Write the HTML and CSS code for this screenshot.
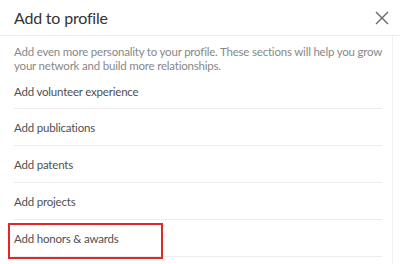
FILE: index.html
```html
<!DOCTYPE html>
<html lang="en">
<head>
  <meta charset="UTF-8" />
  <title>Add to profile</title>
  <link rel="stylesheet" href="styles.css">
</head>
<body>
  <div class="modal">
    <div class="modal-header">
      <h2>Add to profile</h2>
      <button class="close-btn" title="Dismiss">
        <svg width="14" height="14" viewBox="0 0 14 14">
          <path d="M1 1 L13 13 M13 1 L1 13" stroke="#666" stroke-width="1.4" fill="none"/>
        </svg>
      </button>
    </div>
    <div class="modal-body">
      <p class="intro">Add even more personality to your profile. These sections will help you grow your network and build more relationships.</p>
      <ul class="section-list">
        <li>Add volunteer experience</li>
        <li>Add publications</li>
        <li>Add patents</li>
        <li>Add projects</li>
        <li class="highlight">Add honors &amp; awards</li>
      </ul>
    </div>
  </div>
</body>
</html>
```

FILE: styles.css
```css
/* ===== Base ===== */
* {
  margin: 0;
  padding: 0;
  box-sizing: border-box;
}
html, body {
  background: #fff;
  font-family: 'Lato', 'Open Sans', sans-serif;
  color: #333;
  overflow: hidden;
}

/* ===== Header ===== */
.modal-header {
  display: flex;
  justify-content: space-between;
  align-items: center;
  height: 36px;
  padding: 0 6px 0 14px;
  border-bottom: 1px solid #ebebeb;
}
.modal-header h2 {
  font-size: 16px;
  font-weight: 400;
  color: #333;
  letter-spacing: -0.2px;
}
.close-btn {
  background: none;
  border: none;
  width: 24px;
  height: 24px;
  display: flex;
  justify-content: center;
  align-items: center;
}

/* ===== Body ===== */
.modal-body {
  margin-right: 7px;
  border-right: 1px solid #f0f0f0;
  height: 228px;
  padding: 9px 8px 0 14px;
}
.intro {
  font-size: 11.5px;
  line-height: 14px;
  letter-spacing: -0.2px;
  color: #888;
}
.section-list {
  list-style: none;
  margin-top: 0;
  margin-right: 2px;
}
.section-list li {
  position: relative;
  height: 37px;
  line-height: 37px;
  font-size: 11.5px;
  letter-spacing: -0.2px;
  font-weight: 400;
  color: #4f4f4f;
  border-bottom: 1px solid #ececec;
}
.section-list li:first-child {
  height: 36px;
}

/* annotation box around the last row */
.highlight::after {
  content: '';
  position: absolute;
  left: -6px;
  top: 3px;
  width: 151px;
  height: 32px;
  border: 2px solid #e1262c;
}
```
